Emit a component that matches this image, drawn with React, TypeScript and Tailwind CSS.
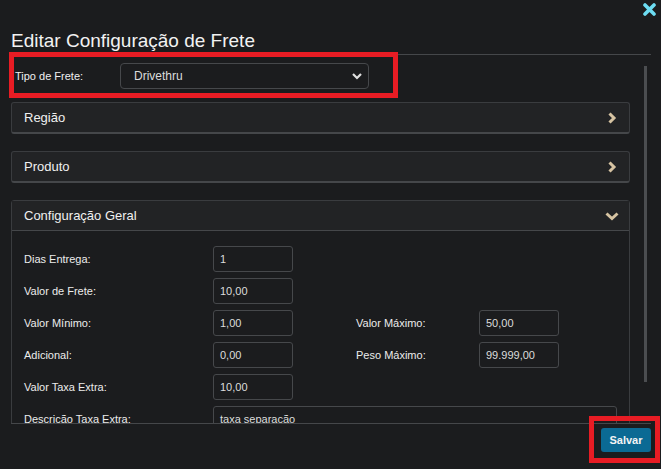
import React from "react";

const Chevron = ({ dir }: { dir: "right" | "down" }) =>
  dir === "right" ? (
    <svg width="10" height="12" viewBox="0 0 10 12" className="block">
      <polyline points="2.5,1.5 7,6 2.5,10.5" fill="none" stroke="#d6c3a2" strokeWidth="3" strokeLinecap="butt" strokeLinejoin="miter" />
    </svg>
  ) : (
    <svg width="14" height="10" viewBox="0 0 14 10" className="block">
      <polyline points="1.5,2.5 7,7.5 12.5,2.5" fill="none" stroke="#d6c3a2" strokeWidth="3" strokeLinecap="butt" strokeLinejoin="miter" />
    </svg>
  );

const Field = ({ label, value, wide }: { label: string; value: string; wide?: boolean }) => (
  <div className="flex items-center h-[26px]">
    <div className="w-[189px] text-[11px] text-[#ececec]">{label}</div>
    <div
      className={`${wide ? "w-[404px]" : "w-[80px]"} h-[26px] border border-[#46484b] rounded-[3px] bg-[#1b1c1e] flex items-center px-[6px] text-[11px] text-[#dcdcdc]`}
    >
      {value}
    </div>
  </div>
);

const Field2 = ({ label, value }: { label: string; value: string }) => (
  <div className="flex items-center h-[26px] ml-[63px]">
    <div className="w-[123px] text-[11px] text-[#ececec]">{label}</div>
    <div className="w-[80px] h-[26px] border border-[#46484b] rounded-[3px] bg-[#1b1c1e] flex items-center px-[6px] text-[11px] text-[#dcdcdc]">
      {value}
    </div>
  </div>
);

export default function App() {
  return (
    <div
      className="relative w-[661px] h-[469px] overflow-hidden bg-[#1b1c1e] text-[#eee]"
      style={{ fontFamily: '"Liberation Sans", Arial, sans-serif' }}
    >
      <div className="pl-[11px] pr-[10px]">
        {/* top bar with close */}
        <div className="h-[30px] flex justify-end items-start pt-[3px]">
          <svg width="13" height="13" viewBox="0 0 13 13" className="block mr-[-5px]">
            <path d="M2 2 L11 11 M11 2 L2 11" stroke="#6ddcf2" strokeWidth="3.6" strokeLinecap="round" />
          </svg>
        </div>
        <div className="h-[22px] leading-[22px] text-[19px] text-[#f2f2f2]">Editar Configuração de Frete</div>
        <div className="mt-[2px] border-t border-[#45474a]" />

        {/* body */}
        <div className="h-[368px] overflow-hidden flex">
          <div className="w-[619px] pt-[8px]">
            <div className="flex items-center h-[26px]">
              <div className="w-[109px] pl-[4px] text-[11px] text-[#f0f0f0]">Tipo de Frete:</div>
              <div className="w-[249px] h-[26px] border border-[#46484b] rounded-[4px] flex items-center justify-between pl-[13px] pr-[5px] text-[12px] text-[#dcdcdc]">
                <span>Drivethru</span>
                <svg width="12" height="8" viewBox="0 0 12 8" className="block">
                  <polyline points="2,2 6,6 10,2" fill="none" stroke="#e0e0e0" strokeWidth="2.2" />
                </svg>
              </div>
            </div>

            <div className="mt-[13px] flex flex-col gap-[17px]">
              <div className="h-[32px] bg-[#222325] border border-[#3a3c3f] border-b-2 border-b-[#45474a] rounded-[3px] flex items-center justify-between pl-[12px] pr-[12px]">
                <span className="text-[13px] text-[#f0f0f0]">Região</span>
                <Chevron dir="right" />
              </div>
              <div className="h-[32px] bg-[#222325] border border-[#3a3c3f] border-b-2 border-b-[#45474a] rounded-[3px] flex items-center justify-between pl-[12px] pr-[12px]">
                <span className="text-[13px] text-[#f0f0f0]">Produto</span>
                <Chevron dir="right" />
              </div>
              <div className="border border-[#3a3c3f] rounded-t-[3px]">
                <div className="h-[30px] bg-[#222325] border-b border-[#45474a] flex items-center justify-between pl-[12px] pr-[10px]">
                  <span className="text-[13px] text-[#f0f0f0]">Configuração Geral</span>
                  <Chevron dir="down" />
                </div>
                <div className="pl-[12px] pt-[15px] pb-[20px] flex flex-col gap-[6px]">
                  <Field label="Dias Entrega:" value="1" />
                  <Field label="Valor de Frete:" value="10,00" />
                  <div className="flex">
                    <Field label="Valor Mínimo:" value="1,00" />
                    <Field2 label="Valor Máximo:" value="50,00" />
                  </div>
                  <div className="flex">
                    <Field label="Adicional:" value="0,00" />
                    <Field2 label="Peso Máximo:" value="99.999,00" />
                  </div>
                  <Field label="Valor Taxa Extra:" value="10,00" />
                  <Field label="Descrição Taxa Extra:" value="taxa separação" wide />
                </div>
              </div>
            </div>
          </div>
          <div className="flex-1 flex justify-end pr-[4px] pt-[11px]">
            <div className="w-[3px] h-[316px] bg-[#4b4d50]" />
          </div>
        </div>

        {/* footer */}
        <div className="border-t border-[#45474a] flex justify-end pt-[4px]">
          <button className="w-[50px] h-[24px] rounded-[3px] bg-[#0b6a94] text-[11px] font-bold text-[#f4f4f4]">
            Salvar
          </button>
        </div>
      </div>

      {/* annotation overlays */}
      <div className="absolute left-[9px] top-[52px] w-[389px] h-[46px] border-[5px] border-[#e81c24] pointer-events-none" />
      <div className="absolute left-[589px] top-[416px] w-[71px] h-[47px] border-[5px] border-[#e81c24] pointer-events-none" />
    </div>
  );
}
